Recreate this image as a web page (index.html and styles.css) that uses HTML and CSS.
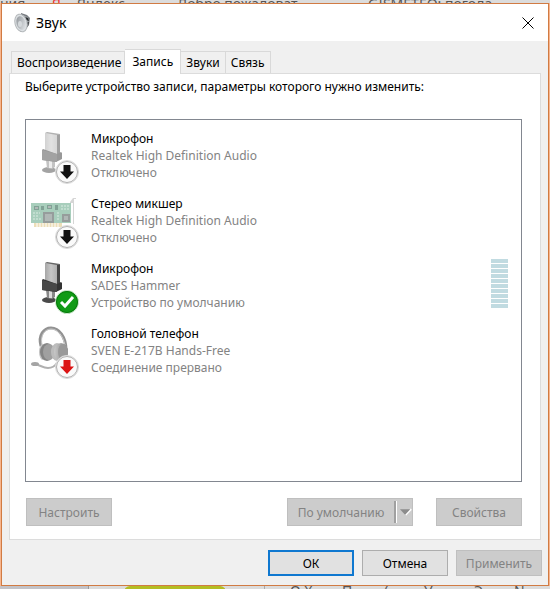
FILE: index.html
```html
<!DOCTYPE html>
<html lang="ru">
<head>
<meta charset="utf-8">
<title>Звук</title>
<link rel="stylesheet" href="styles.css">
</head>
<body>
<svg class="defs" aria-hidden="true">
  <defs>
    <linearGradient id="metal" x1="0" x2="1"><stop offset="0" stop-color="#a6a6a6"/><stop offset=".5" stop-color="#c6c6c6"/><stop offset="1" stop-color="#b0b0b0"/></linearGradient>
    <linearGradient id="cone" x1="0" y1="0" x2="1" y2="1"><stop offset="0" stop-color="#8c9196"/><stop offset="1" stop-color="#e8ebee"/></linearGradient>
    <linearGradient id="cup" x1="0" x2="1"><stop offset="0" stop-color="#c8c8c8"/><stop offset="1" stop-color="#808080"/></linearGradient>
    <symbol id="mic" viewBox="0 0 48 54">
      <ellipse cx="18" cy="39" rx="7" ry="3" fill="#4a4a4a"/>
      <path d="M15 29h9v7l-3 2-5-1z" fill="#888"/>
      <path d="M18 30h3v7h-3z" fill="#ddd"/>
      <path d="M26 3l3 1v21l-3 1z" fill="#444"/>
      <path d="M14 2l12 1v23l-12-2z" fill="url(#metal)"/>
      <path d="M14 2l2-1 13 2v1l-3 0z" fill="#666"/>
      <path d="M11 19l1-1 14 5 4-2 1 1v6l-6 3-14-2z" fill="#333"/>
      <path d="M11 19l15 4v8l-15-2z" fill="#484848"/>
    </symbol>
    <symbol id="down" viewBox="0 0 24 24">
      <circle cx="12" cy="12" r="11.500" fill="#fff" stroke="#d8d8d8"/>
      <circle cx="12" cy="12" r="10.500" fill="#fafafa" stroke="#b0b0b0"/>
      <path d="M8.500 5h7v6.500h3.500L12 19l-7-7.500h3.500z" fill="currentColor"/>
    </symbol>
  </defs>
</svg>

<div class="backdrop backdrop-top" aria-hidden="true">
  <span>ния</span><span class="red">Я</span><span>Яндекс</span><span class="vk"></span><span>Добро пожаловат</span><span class="drop"></span><span>GISMETEO: погода</span><span class="teal"></span>
</div>

<main class="dialog">
  <header class="titlebar">
    <svg class="speaker" viewBox="0 0 18 20" aria-hidden="true">
      <path d="M8 0l6 2 3 3-1 7-4 5-5 2z" fill="#777b80"/>
      <path d="M10 2l5 2 1 7-4 6z" fill="#999da1"/>
      <path d="M12 4l3 1 1 3-3-1zM13 10l3-1-1 4-3 3z" fill="#292c2f"/>
      <ellipse cx="8" cy="10" rx="6" ry="9" fill="#dce0e3" stroke="#b4b8bb" transform="rotate(-15 8 10)"/>
      <ellipse cx="8" cy="10" rx="4.500" ry="7" fill="url(#cone)" transform="rotate(-15 8 10)"/>
      <ellipse cx="7" cy="11" rx="2" ry="3" fill="#d5d9dc"/>
    </svg>
    <h1>Звук</h1>
    <button class="close" aria-label="Закрыть"><svg viewBox="0 0 12 12"><path d="M.5.5l11 11M11.500.5l-11 11" stroke="#000" fill="none"/></svg></button>
  </header>

  <div class="content">
    <div class="tabs" role="tablist">
      <button class="tab" role="tab">Воспроизведение</button>
      <button class="tab selected" role="tab" aria-selected="true">Запись</button>
      <button class="tab" role="tab">Звуки</button>
      <button class="tab" role="tab">Связь</button>
    </div>
    <section class="panel" role="tabpanel">
      <p class="hint">Выберите устройство записи, параметры которого нужно изменить:</p>
      <ul class="devices">
        <li class="device">
          <svg class="icon" viewBox="0 0 48 54" aria-hidden="true"><use href="#mic" width="48" height="54" opacity=".5"/><use class="black" href="#down" x="24" y="29" width="24" height="24"/></svg>
          <div class="info"><h2>Микрофон</h2><p>Realtek High Definition Audio</p><p>Отключено</p></div>
        </li>
        <li class="device">
          <svg class="icon" viewBox="0 0 48 54" aria-hidden="true">
            <g opacity=".6">
              <path d="M39 7V6l3-4h3v1h-2v25h-1V7z" fill="#bbb"/>
              <path d="M0 7h40v20H0z" fill="#6fae90"/>
              <path d="M3 27h28v4H3z" fill="#e0c98a"/>
              <path d="M6 27v4M9 27v4M12 27v4M15 27v4M18 27v4M21 27v4M24 27v4M27 27v4" stroke="#fff"/>
              <path d="M12 16h11v11H12zM31 18h8v8h-8z" fill="#525d5b"/>
              <path d="M3 10h5v4H3zM10 10h3v4h-3zM16 9h5v4h-5zM24 9h3v5h-3z" fill="#2e6650"/>
              <path d="M2 17h7M2 20h6M2 23h8M26 17h3M26 20h3M26 23h3M31 9v6M34 9v6M37 9v6" stroke="#c4e2d0" stroke-dasharray="2 1"/>
              <path d="M4 11h3v2H4zM17 10h3v2h-3zM14 18h7v7h-7zM33 20h4v4h-4z" fill="#7d8986"/>
            </g>
            <use class="black" href="#down" x="24" y="29" width="24" height="24"/>
          </svg>
          <div class="info"><h2>Стерео микшер</h2><p>Realtek High Definition Audio</p><p>Отключено</p></div>
        </li>
        <li class="device">
          <svg class="icon" viewBox="0 0 48 54" aria-hidden="true"><use href="#mic" width="48" height="54"/><circle cx="36" cy="41" r="11.500" fill="#119b16" stroke="#d5e8d5"/><circle cx="36" cy="41" r="10.500" fill="none" stroke="#087b0c"/><path d="M30 41l4 4 8-9" fill="none" stroke="#fff" stroke-width="3"/></svg>
          <div class="info"><h2>Микрофон</h2><p>SADES Hammer</p><p>Устройство по умолчанию</p></div>
          <div class="meter" role="meter" aria-label="Уровень" aria-valuenow="0" aria-valuemin="0" aria-valuemax="10"><i></i><i></i><i></i><i></i><i></i><i></i><i></i><i></i><i></i><i></i></div>
        </li>
        <li class="device">
          <svg class="icon" viewBox="0 0 48 54" aria-hidden="true">
            <path d="M10 20C7 9 13 2 20 2c8 0 15 9 15 22" fill="none" stroke="#929292" stroke-width="3"/>
            <path d="M11 19C9 9 14 3 20 3c7 0 12 7 14 16" fill="none" stroke="#ccc"/>
            <ellipse cx="12" cy="26" rx="4" ry="8" fill="#c4c4c4"/>
            <ellipse cx="16" cy="26" rx="7" ry="9" fill="#858585"/>
            <ellipse cx="18" cy="26" rx="6" ry="8" fill="#a0a0a0"/>
            <ellipse cx="26" cy="26" rx="6" ry="9" fill="#bcbcbc"/>
            <ellipse cx="30" cy="26" rx="7" ry="9" fill="url(#cup)"/>
            <ellipse cx="32" cy="26" rx="5" ry="8" fill="#999"/>
            <path d="M4 38c5 1 8 4 13 4 4 0 7-2 9-5" fill="none" stroke="#b0b0b0" stroke-width="2"/>
            <ellipse cx="4" cy="38" rx="4" ry="2" fill="#a4a4a4"/>
            <use class="redicon" href="#down" x="24" y="29" width="24" height="24"/>
          </svg>
          <div class="info"><h2>Головной телефон</h2><p>SVEN E-217B Hands-Free</p><p>Соединение прервано</p></div>
        </li>
      </ul>
      <div class="actions">
        <button class="btn flat" disabled>Настроить</button>
        <div class="split">
          <button class="btn flat main" disabled>По умолчанию</button>
          <button class="btn flat arrow" disabled aria-label="Ещё"><svg viewBox="0 0 14 8"><path d="M7 7l6-6" stroke="#fff" stroke-width="2"/><path d="M1 1h11L6.500 7z" fill="#8c8c8c"/></svg></button>
        </div>
        <button class="btn flat" disabled>Свойства</button>
      </div>
    </section>
    <footer class="footer">
      <button class="btn default">ОК</button>
      <button class="btn">Отмена</button>
      <button class="btn flat" disabled>Применить</button>
    </footer>
  </div>
</main>

<div class="backdrop backdrop-bottom" aria-hidden="true"><span class="shade"></span><span class="lime"></span><span class="cell"></span><span>О Х</span><span>П</span><span>(</span><span>У</span><span>Э</span><span>N</span></div>
</body>
</html>
```
FILE: styles.css
```css
* { box-sizing: border-box; }
body {
  margin: 0;
  min-height: 100vh;
  display: flex;
  flex-direction: column;
  font: 12px/17px "Noto Sans", "Open Sans", sans-serif;
  color: #000;
  background: #f7b68f;
}
h1, h2, p, ul { margin: 0; padding: 0; font: inherit; }
button { font: inherit; color: inherit; border-radius: 0; padding: 0; margin: 0; }
.defs { position: absolute; width: 0; height: 0; }

.backdrop { display: grid; height: 3px; overflow: hidden; background: #dcdcdc; color: #555; white-space: nowrap; }
.backdrop-top { grid-template-columns: 52px 25px 68px 32px 166px 25px 1fr 20px; align-items: end; font-size: 14px; line-height: 8px; }
.backdrop-top .red { color: #e33; }
.backdrop-top .vk { width: 20px; height: 3px; background: #47709f; }
.backdrop-top .drop { width: 11px; height: 3px; background: #2b8bd0; }
.backdrop-top .teal { height: 3px; background: #168aa5; }
.backdrop-bottom { grid-template-columns: 124px 140px 26px 52px 42px 40px 50px 40px 1fr; line-height: 9px; font-size: 14px; }
.backdrop-bottom .shade { width: 89px; background: #c3c3c8; border-right: 1px solid #999; }
.backdrop-bottom .lime { width: 102px; background: #b4bd22; border-radius: 6px 6px 0 0; }
.backdrop-bottom .cell { width: 4px; border-left: 1px solid #aaa; }

.dialog { flex: 1; display: flex; flex-direction: column; margin: 0 1px; border: 1px solid #d17b43; background: #f0f0f0; }
.titlebar { display: flex; align-items: center; height: 37px; padding: 0 14px 0 11px; background: #fff; }
.speaker { width: 18px; height: 20px; }
.titlebar h1 { margin-left: 5px; font-size: 14px; }
.close { display: flex; margin-left: auto; border: 0; background: none; }
.close svg { width: 12px; height: 12px; }

.content { flex: 1; display: flex; flex-direction: column; padding: 8px 7px 9px; }
.tabs { display: flex; align-items: flex-end; padding-left: 2px; }
.tab { height: 22px; padding: 0 5px; border: 1px solid #d9d9d9; border-bottom: 0; border-left-width: 0; background: #f0f0f0; }
.tab:first-child { border-left-width: 1px; padding-right: 3px; }
.tab.selected { height: 25px; padding: 0 7px 2px; margin-bottom: -1px; background: #fff; z-index: 1; }
.panel { flex: 1; display: flex; flex-direction: column; padding: 4px 18px 13px 15px; border: 1px solid #dcdcdc; background: #fff; }
.devices { flex: 1; margin-top: 24px; padding-top: 10px; list-style: none; border: 1px solid #828790; }
.device { display: flex; height: 65px; padding-left: 5px; }
.icon { width: 48px; height: 54px; margin-top: 1px; }
.black { color: #111; }
.redicon { color: #dc1414; }
.info { margin-left: 12px; color: #838383; }
.info h2 { color: #000; }
.meter { display: grid; grid-auto-rows: 4px; gap: 1px; align-content: start; width: 17px; margin: -1px 13px 0 auto; }
.meter i { background: #c1dbe1; }

.actions { display: flex; margin-top: 16px; padding-left: 1px; }
.btn { width: 86px; height: 26px; border: 1px solid #adadad; background: #e1e1e1; }
.btn.flat { background: #ccc; border-color: #bfbfbf; color: #838383; }
.btn.default { border: 2px solid #0f78d0; }
.actions .btn { height: 28px; }
.split { display: flex; margin-left: auto; margin-right: 23px; }
.split .main { width: 107px; border-right: 0; }
.split .arrow { display: flex; align-items: center; justify-content: center; width: 19px; border-left: 0; }
.split .arrow::before { content: ""; width: 2px; height: 22px; background: #a0a0a0; border-right: 1px solid #fff; }
.split .arrow svg { width: 14px; height: 8px; margin-left: 2px; }
.footer { display: flex; justify-content: flex-end; gap: 8px; margin-top: 10px; margin-right: -1px; }
```
